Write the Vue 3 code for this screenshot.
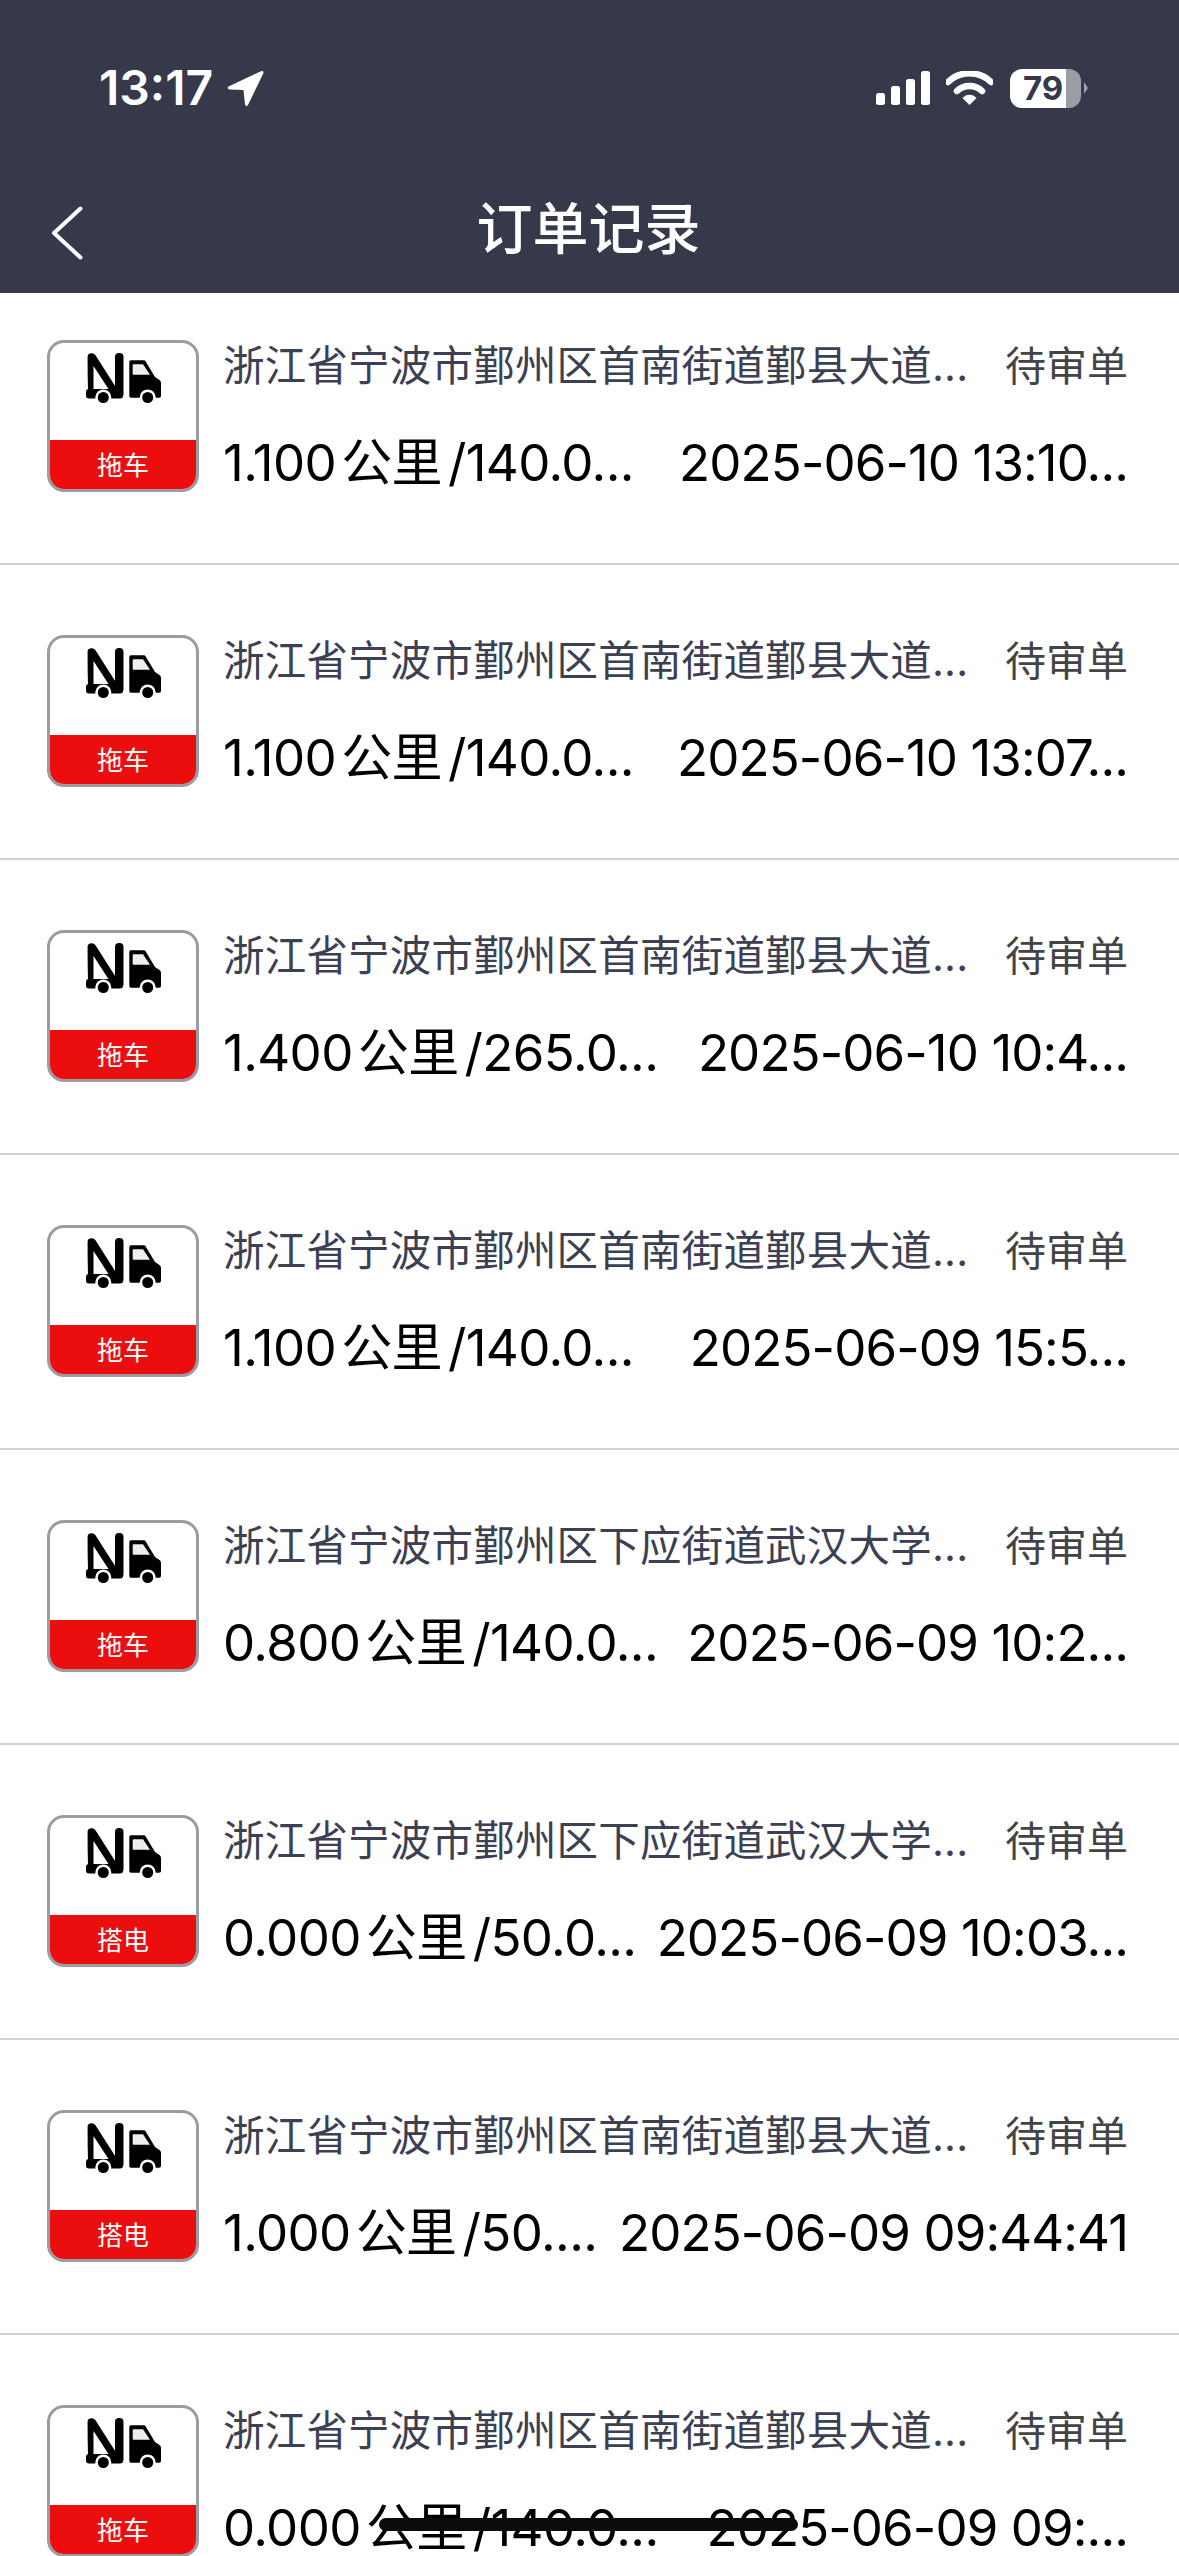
<template>
  <div class="page">
    <header class="header">
      <div class="status-bar">
        <div class="status-left">
          <span class="time">13:17</span>
          <svg class="arrow" width="37" height="37" viewBox="0 0 37 37">
            <path d="M34.5 1 L1.5 16.5 Q-.5 18.5 2.5 19.5 L16.5 20 L18 34.5 Q19.5 37.5 21 35 L36.5 3 Q36.8 .4 34.5 1 Z" fill="#fff" />
          </svg>
        </div>
        <div class="status-right">
          <svg class="signal" width="54" height="34" viewBox="0 0 54 34">
            <rect x="0" y="22" width="9" height="12" rx="2.5" fill="#fff" />
            <rect x="15" y="15" width="9" height="19" rx="2.5" fill="#fff" />
            <rect x="30" y="8" width="9" height="26" rx="2.5" fill="#fff" />
            <rect x="45" y="0" width="9" height="34" rx="2.5" fill="#fff" />
          </svg>
          <svg class="wifi" width="47" height="34" viewBox="0 0 47 34">
            <path d="M2 11 A31 31 0 0 1 45 11" fill="none" stroke="#fff" stroke-width="6.5" stroke-linecap="round" />
            <path d="M11 20 A18 18 0 0 1 36 20" fill="none" stroke="#fff" stroke-width="6.5" stroke-linecap="round" />
            <path d="M16.5 27 A9 9 0 0 1 30.5 27 L23.5 34 Z" fill="#fff" />
          </svg>
          <div class="battery">
            <div class="battery-body">
              <span class="battery-text">79</span>
            </div>
            <span class="battery-nub"></span>
          </div>
        </div>
      </div>
      <nav class="nav">
        <svg class="back" width="32" height="54" viewBox="0 0 32 54">
          <path d="M29.5 2.5 L3 27 L29.5 51.5" fill="none" stroke="#fff" stroke-width="4" stroke-linecap="round" stroke-linejoin="round" />
        </svg>
        <h1 class="title">订单记录</h1>
        <span></span>
      </nav>
    </header>

    <div class="order-list">
      <div v-for="order in orders" :key="order.id" class="order-item">
        <div class="order-icon">
          <div class="icon-top">
            <svg width="75" height="50" viewBox="0 0 75 50">
              <path fill-rule="evenodd" d="M4 .6 Q7.5 -.5 9.5 2.3 L31 36 L2 37 Q1.5 20 1.6 3 Q2 1 4 .6 Z M7.5 13 L7.5 36 L22.5 36 Z" />
              <rect x="29" y="0" width="8.5" height="45" rx="4" />
              <rect x="0" y="36" width="37" height="9.5" rx="3" />
              <circle cx="17.3" cy="44.5" r="8" fill="#fff" />
              <circle cx="17.3" cy="44.5" r="5.5" />
              <path d="M45 7.3 L58 7.3 Q59.5 7.3 60 9 L69 24 L73.5 27 Q75 28 75 30 L75 43 Q75 44.8 73 44.8 L45 44.8 Q43.3 44.8 43.3 43 L43.3 9 Q43.3 7.3 45 7.3 Z" />
              <path d="M47.5 11.3 L57 11.3 L64 21.7 L47.5 21.7 Q46.7 21.7 46.7 21 L46.7 12 Q46.7 11.3 47.5 11.3 Z" fill="#eee" />
              <circle cx="61.7" cy="44.5" r="8" fill="#fff" />
              <circle cx="61.7" cy="44.5" r="5.5" />
            </svg>
          </div>
          <div class="icon-label">{{ order.type }}</div>
        </div>
        <div class="order-info">
          <div class="info-line">
            <span class="address">{{ order.address }}</span>
            <span class="status">待审单</span>
          </div>
          <div class="info-line price-line">
            <span class="price">{{ order.distance }}<span class="unit">公里</span>/{{ order.fee }}</span>
            <span class="date">{{ order.date }}</span>
          </div>
        </div>
      </div>
    </div>

    <div class="home-indicator"></div>
  </div>
</template>

<script setup>
const shounan = '浙江省宁波市鄞州区首南街道鄞县大道...'
const xiaying = '浙江省宁波市鄞州区下应街道武汉大学...'

const orders = [
  { id: 1, type: '拖车', address: shounan, distance: '1.100', fee: '140.0...', date: '2025-06-10 13:10...' },
  { id: 2, type: '拖车', address: shounan, distance: '1.100', fee: '140.0...', date: '2025-06-10 13:07...' },
  { id: 3, type: '拖车', address: shounan, distance: '1.400', fee: '265.0...', date: '2025-06-10 10:4...' },
  { id: 4, type: '拖车', address: shounan, distance: '1.100', fee: '140.0...', date: '2025-06-09 15:5...' },
  { id: 5, type: '拖车', address: xiaying, distance: '0.800', fee: '140.0...', date: '2025-06-09 10:2...' },
  { id: 6, type: '搭电', address: xiaying, distance: '0.000', fee: '50.0...', date: '2025-06-09 10:03...' },
  { id: 7, type: '搭电', address: shounan, distance: '1.000', fee: '50....', date: '2025-06-09 09:44:41' },
  { id: 8, type: '拖车', address: shounan, distance: '0.000', fee: '140.0...', date: '2025-06-09 09:...' }
]
</script>

<style>
html, body {
  margin: 0;
  background: #fff;
}
</style>

<style scoped>
.page {
  position: relative;
  width: 1179px;
  height: 2556px;
  overflow: hidden;
  background: #fff;
  font-family: Inter, "Noto Sans CJK SC", sans-serif;
}

.header {
  height: 293px;
  box-sizing: border-box;
  padding-top: 68px;
  background: #36394a;
  color: #fff;
}

.status-bar {
  display: flex;
  justify-content: space-between;
  align-items: center;
  height: 40px;
  padding: 0 91px 0 99px;
}

.status-left {
  display: flex;
  align-items: center;
  gap: 14px;
}

.time {
  font-size: 48px;
  font-weight: 600;
  line-height: 40px;
}

.status-right {
  display: flex;
  align-items: center;
}

.signal {
  margin-right: 16px;
}

.wifi {
  margin-right: 17px;
}

.battery {
  display: flex;
  align-items: center;
  gap: 3px;
}

.battery-body {
  display: flex;
  align-items: center;
  width: 71px;
  height: 39px;
  box-sizing: border-box;
  padding-left: 13px;
  border-radius: 12px;
  background: linear-gradient(to right, #fff 56px, #9c9ca6 56px);
}

.battery-text {
  color: #36394a;
  font-size: 33px;
  font-weight: 700;
  line-height: 39px;
}

.battery-nub {
  width: 0;
  height: 0;
  border-top: 6px solid transparent;
  border-bottom: 6px solid transparent;
  border-left: 4px solid #9c9ca6;
}

.nav {
  display: grid;
  grid-template-columns: 1fr auto 1fr;
  align-items: center;
  height: 54px;
  margin-top: 94px;
  padding: 0 53px 0 51px;
}

.title {
  margin: 0 0 8px;
  font-size: 56px;
  font-weight: 500;
  line-height: 54px;
}

.order-item {
  display: flex;
  gap: 24px;
  height: 295px;
  box-sizing: border-box;
  padding: 70px 51px 0 47px;
  border-bottom: 2px solid #d2d2d2;
}

.order-item:first-child {
  height: 272px;
  padding-top: 47px;
}

.order-icon {
  display: flex;
  flex-direction: column;
  flex: none;
  width: 152px;
  height: 152px;
  box-sizing: border-box;
  overflow: hidden;
  border: 3px solid #9a9ca3;
  border-radius: 17px;
}

.icon-top {
  flex: 1;
  display: flex;
  justify-content: center;
  padding-top: 10px;
}

.icon-label {
  height: 49px;
  background: #ec0e0e;
  color: #fff;
  font-size: 26px;
  line-height: 51px;
  text-align: center;
}

.order-info {
  flex: 1;
  min-width: 0;
}

.info-line {
  display: flex;
  justify-content: space-between;
  line-height: 52px;
  white-space: nowrap;
}

.address {
  color: #3d3f52;
  font-size: 41.5px;
  letter-spacing: 0.2px;
}

.status {
  color: #444;
  font-size: 41px;
}

.price-line {
  margin-top: 41px;
  line-height: 60px;
  font-size: 51px;
  color: #000;
}

.price {
  letter-spacing: -0.6px;
}

.unit {
  margin: 0 6px 0 5px;
}

.date {
  letter-spacing: -0.9px;
}

.home-indicator {
  position: absolute;
  left: 379px;
  top: 2518px;
  width: 419px;
  height: 13px;
  border-radius: 7px;
  background: #0b0b0b;
}
</style>
